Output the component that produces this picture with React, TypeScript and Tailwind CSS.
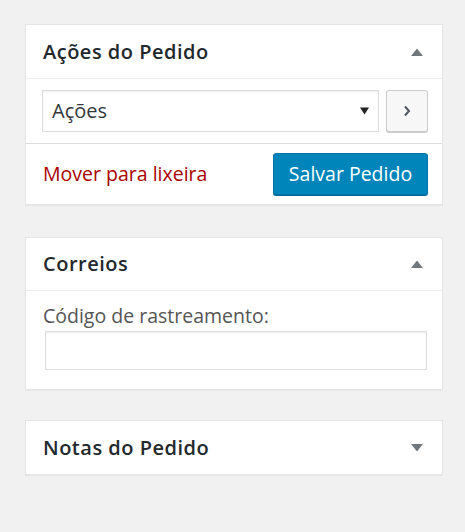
import React from "react";

function Arrow({ up }: { up: boolean }) {
  return (
    <svg width="12" height="8" viewBox="0 0 12 8" className="shrink-0">
      {up ? <path d="M0 8 L6 0.5 L12 8 Z" fill="#72777c" /> : <path d="M0 0 L6 7.5 L12 0 Z" fill="#72777c" />}
    </svg>
  );
}

function Header({ title, up, border = true, h }: { title: string; up: boolean; border?: boolean; h: string }) {
  return (
    <div className={`flex items-center justify-between ${h} pl-[17px] pr-[19px] ${border ? "border-b border-[#eeeeee]" : ""}`}>
      <h2 className="text-[20px] font-semibold text-[#23282d] tracking-[0.5px]">{title}</h2>
      <Arrow up={up} />
    </div>
  );
}

export default function App() {
  return (
    <div className="min-h-[532px] w-[465px] bg-[#f1f1f1] pt-[24px] pl-[25px] pr-[22px] text-[#444]" style={{ fontFamily: '"Open Sans", sans-serif' }}>
      <div className="bg-white border border-[#e5e5e5] shadow-[0_1px_1px_rgba(0,0,0,0.04)]">
        <Header title="Ações do Pedido" up h="h-[54px]" />
        <div className="flex items-center gap-[7px] pl-[16px] pr-[14px] h-[65px] border-b border-[#dddddd]">
          <div className="flex-1 h-[42px] border border-[#dddddd] flex items-center justify-between pl-[9px] pr-[9px] shadow-[inset_0_1px_2px_rgba(0,0,0,0.07)]">
            <span className="text-[20px] text-[#32373c]">Ações</span>
            <svg width="9" height="8" viewBox="0 0 9 8"><path d="M0 0.5 L4.5 7.5 L9 0.5 Z" fill="#222" /></svg>
          </div>
          <div className="w-[42px] h-[42px] rounded-[3px] border border-[#cccccc] bg-[#f7f7f7] shadow-[0_1px_0_#cccccc] flex items-center justify-center">
            <svg width="8" height="12" viewBox="0 0 8 12"><path d="M2 1.5 L6 6 L2 10.5" stroke="#50575e" strokeWidth="2" fill="none" /></svg>
          </div>
        </div>
        <div className="flex items-center justify-between pl-[17px] pr-[14px] h-[60px]">
          <span className="text-[19.5px] text-[#a00]">Mover para lixeira</span>
          <div className="h-[42px] w-[155px] rounded-[3px] bg-[#0085ba] border border-[#0073aa] shadow-[0_1px_0_#006799] flex items-center justify-center text-white text-[19.5px]">
            Salvar Pedido
          </div>
        </div>
      </div>

      <div className="mt-[32px] bg-white border border-[#e5e5e5] shadow-[0_1px_1px_rgba(0,0,0,0.04)]">
        <Header title="Correios" up h="h-[53px]" />
        <div className="pl-[17px] pr-[15px] pt-[11px] pb-[19px]">
          <div className="text-[19.5px] text-[#555] leading-[27px]">Código de rastreamento:</div>
          <div className="ml-[2px] mt-[2px] h-[39px] border border-[#dddddd] shadow-[inset_0_1px_2px_rgba(0,0,0,0.07)]" />
        </div>
      </div>

      <div className="mt-[30px] bg-white border border-[#e5e5e5] shadow-[0_1px_1px_rgba(0,0,0,0.04)]">
        <Header title="Notas do Pedido" up={false} border={false} h="h-[53px]" />
      </div>
    </div>
  );
}
